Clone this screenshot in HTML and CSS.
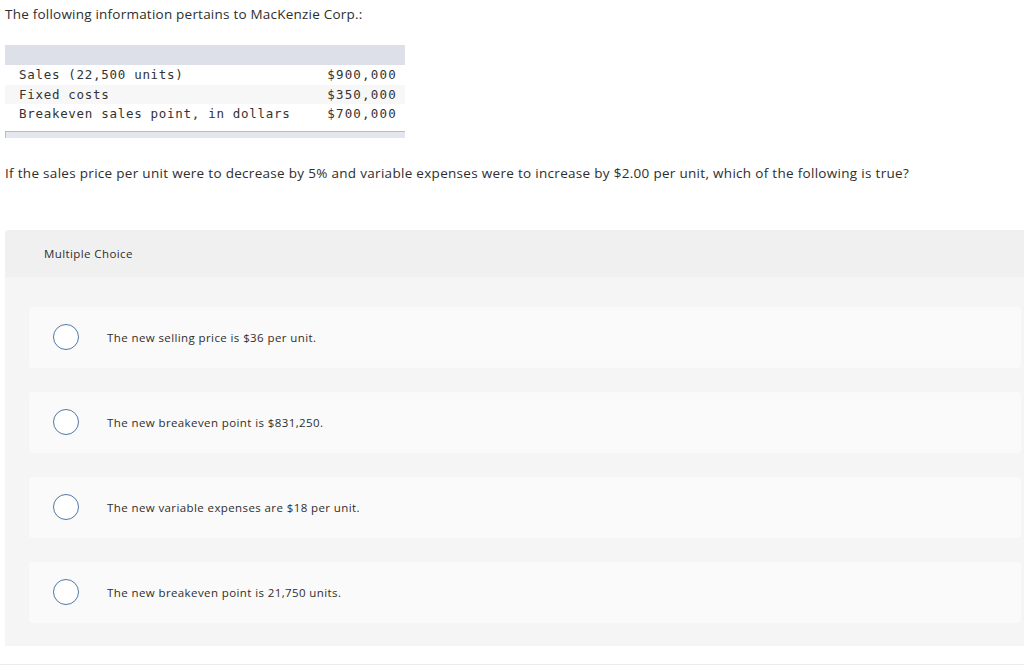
FILE: index.html
```html
<!DOCTYPE html>
<html>
<head>
<meta charset="utf-8">
<link rel="stylesheet" href="styles.css">
</head>
<body>
<div class="page">
  <p class="intro">The following information pertains to MacKenzie Corp.:</p>
  <div class="datatable">
    <div class="thead"></div>
    <div class="row"><span class="label">Sales (22,500 units)</span><span class="val">$900,000</span></div>
    <div class="row alt"><span class="label">Fixed costs</span><span class="val">$350,000</span></div>
    <div class="row"><span class="label">Breakeven sales point, in dollars</span><span class="val">$700,000</span></div>
    <div class="tfoot"></div>
  </div>
  <p class="question">If the sales price per unit were to decrease by 5% and variable expenses were to increase by $2.00 per unit, which of the following is true?</p>
  <div class="mc">
    <div class="mc-head">Multiple Choice</div>
    <div class="mc-body">
      <div class="option"><span class="radio"></span><span class="opt-text">The new selling price is $36 per unit.</span></div>
      <div class="option"><span class="radio"></span><span class="opt-text">The new breakeven point is $831,250.</span></div>
      <div class="option"><span class="radio"></span><span class="opt-text">The new variable expenses are $18 per unit.</span></div>
      <div class="option"><span class="radio"></span><span class="opt-text">The new breakeven point is 21,750 units.</span></div>
    </div>
  </div>
</div>
<div class="bottom-line"></div>
</body>
</html>
```
FILE: styles.css
```css
html, body {
  margin: 0;
  padding: 0;
  background: #fff;
  overflow: hidden;
}
body {
  font-family: "Open Sans", sans-serif;
  color: #2e2e2e;
}
.page {
  padding-left: 5px;
}
.intro {
  margin: 0;
  padding-top: 5px;
  font-size: 13.5px;
  letter-spacing: 0.22px;
  line-height: 18px;
  height: 40px;
}
.datatable {
  width: 400px;
  font-family: "DejaVu Sans Mono", monospace;
  font-size: 12.5px;
  letter-spacing: 0.7px;
  color: #333;
}
.thead {
  height: 20px;
  background: #dde0e8;
}
.row {
  display: flex;
  justify-content: space-between;
  height: 19.5px;
  line-height: 19.5px;
  padding: 0 9px 0 14px;
}
.row.alt {
  background: #f7f7f7;
}
.val {
  letter-spacing: 1.2px;
  margin-right: -1px;
}
.tfoot {
  margin-top: 7px;
  height: 6px;
  background: #e4e7ee;
  border-top: 1px solid #b8bcc4;
  border-left: 1px solid #b8bcc4;
  box-sizing: content-box;
}
.question {
  margin: 0;
  padding-top: 26px;
  font-size: 13.5px;
  letter-spacing: 0.3px;
  line-height: 18px;
  height: 66px;
}
.mc {
  border-radius: 4px 0 0 0;
  background: #f5f5f5;
  overflow: hidden;
}
.mc-head {
  background: #f0f0f0;
  height: 47px;
  line-height: 47px;
  padding-left: 39px;
  font-size: 11.5px;
  letter-spacing: 0.4px;
}
.mc-body {
  display: flex;
  flex-direction: column;
  gap: 24px;
  padding: 30px 3px 23px 24px;
}
.option {
  display: flex;
  align-items: center;
  height: 61px;
  background: #fafafa;
  border-radius: 4px;
  padding-left: 24px;
}
.radio {
  width: 24px;
  height: 24px;
  border: 1px solid #4f79a6;
  border-radius: 50%;
  background: #fff;
  flex: none;
}
.opt-text {
  margin-left: 28px;
  font-size: 11.5px;
  letter-spacing: 0.4px;
}
.bottom-line {
  margin-top: 18px;
  height: 1px;
  background: #ececec;
}
```
